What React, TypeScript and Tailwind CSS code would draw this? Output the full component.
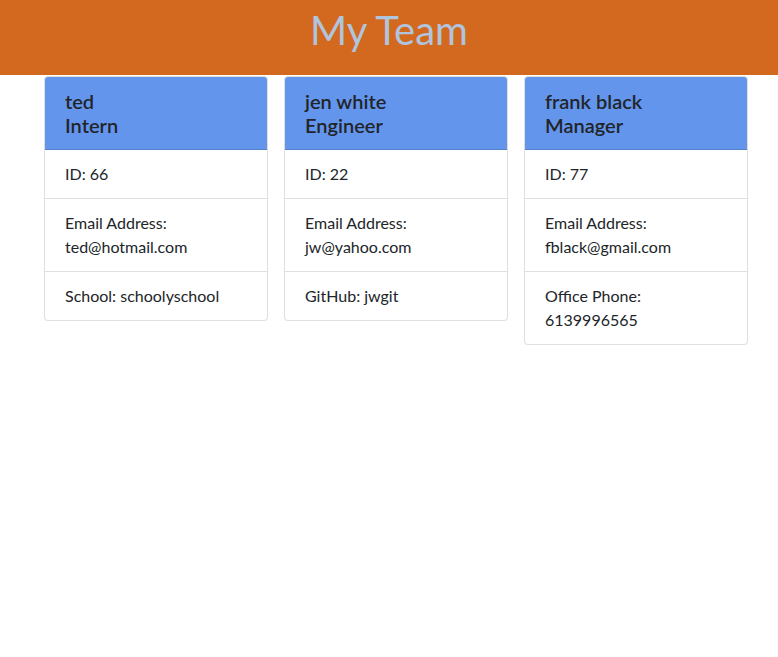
import React from "react";

type Member = { name: string; role: string; id: string; email: string; extra: [string, string] };

const team: Member[] = [
  { name: "ted", role: "Intern", id: "66", email: "ted@hotmail.com", extra: ["School: ", "schoolyschool"] },
  { name: "jen white", role: "Engineer", id: "22", email: "jw@yahoo.com", extra: ["GitHub: ", "jwgit"] },
  { name: "frank black", role: "Manager", id: "77", email: "fblack@gmail.com", extra: ["Office Phone:", "6139996565"] },
];

function Card({ m }: { m: Member }) {
  const phone = m.extra[0] === "Office Phone:";
  return (
    <div className="w-[224px] self-start rounded-[4px] border border-[rgba(0,0,0,0.125)] overflow-hidden bg-white">
      <div className="bg-[#6495ed] px-[20px] py-[12px] border-b border-[rgba(0,0,0,0.125)] text-[20px] leading-[24px] font-semibold text-[#212529]">
        <div>{m.name}</div>
        <div>{m.role}</div>
      </div>
      <div className="px-[20px] py-[12px] text-[16px] leading-[24px]">ID: {m.id}</div>
      <div className="px-[20px] py-[12px] text-[16px] leading-[24px] border-t border-[rgba(0,0,0,0.125)]">
        <div>Email Address:</div>
        <div>{m.email}</div>
      </div>
      <div className="px-[20px] py-[12px] text-[16px] leading-[24px] border-t border-[rgba(0,0,0,0.125)]">
        {phone ? (
          <>
            <div>{m.extra[0]}</div>
            <div>{m.extra[1]}</div>
          </>
        ) : (
          <div>
            {m.extra[0]}
            {m.extra[1]}
          </div>
        )}
      </div>
    </div>
  );
}

export default function App() {
  return (
    <div className="min-h-[657px] bg-white text-[#212529]" style={{ fontFamily: '"Segoe UI", Lato, "Noto Sans", sans-serif' }}>
      <div className="h-[75px] bg-[#d2691e] flex justify-center pt-[6px]">
        <h1 className="text-[40px] leading-[48px] font-normal text-[#b0c4de]">My Team</h1>
      </div>
      <div className="flex gap-[16px] pl-[44px] pt-[1px]">
        {team.map((m) => (
          <Card key={m.name} m={m} />
        ))}
      </div>
    </div>
  );
}
